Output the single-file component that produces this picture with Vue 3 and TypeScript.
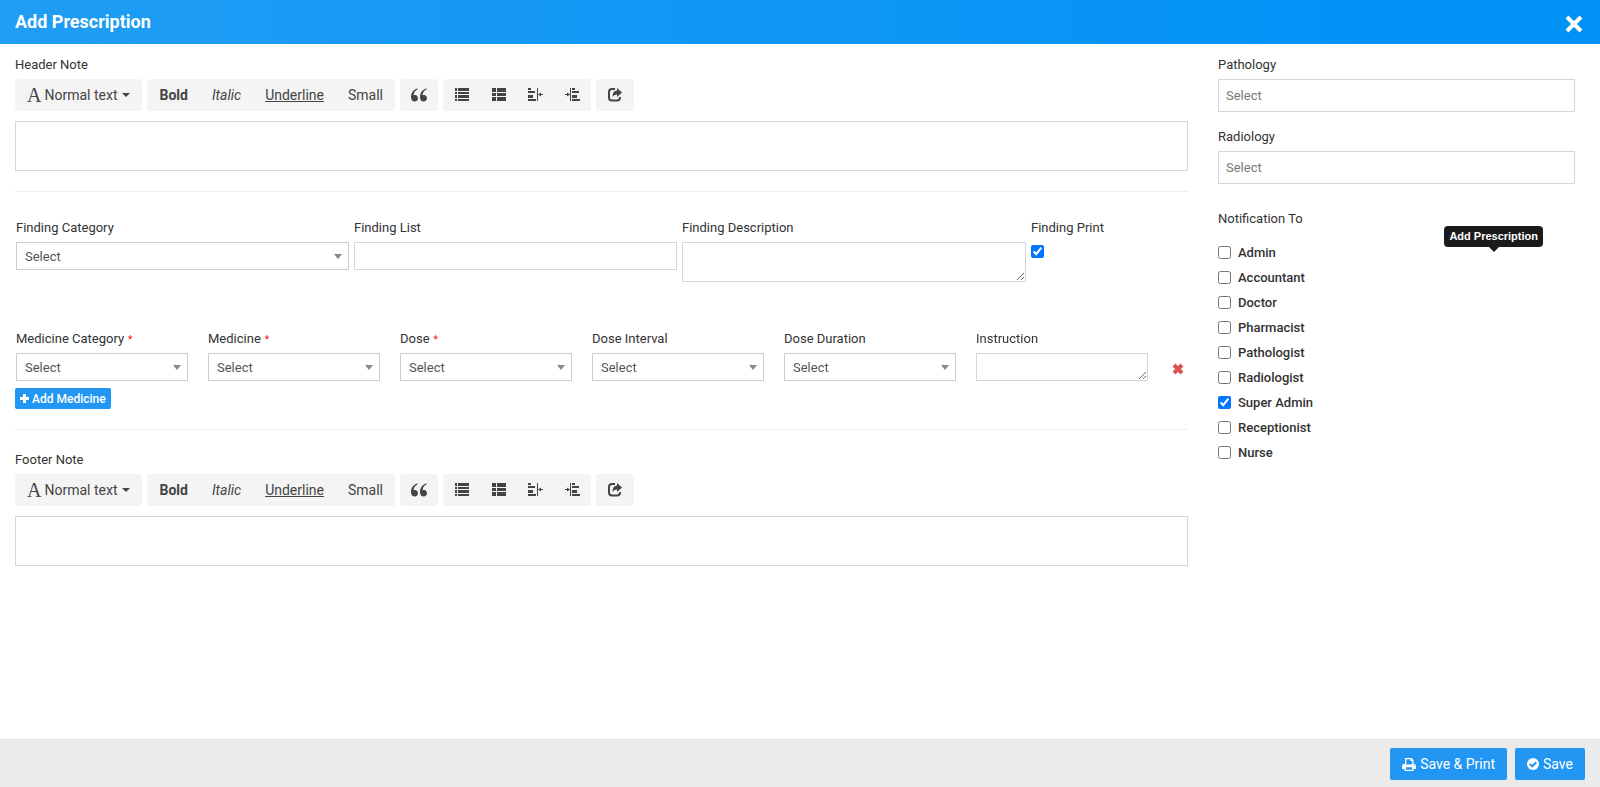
<script setup lang="ts">
import { reactive, ref } from 'vue'

interface MedicineField {
  id: string
  label: string
  required: boolean
}

interface Role {
  name: string
  checked: boolean
}

const notes = [
  { id: 'header-note', label: 'Header Note' },
  { id: 'footer-note', label: 'Footer Note' },
]

const medicineFields: MedicineField[] = [
  { id: 'med-category', label: 'Medicine Category', required: true },
  { id: 'med-name', label: 'Medicine', required: true },
  { id: 'med-dose', label: 'Dose', required: true },
  { id: 'med-interval', label: 'Dose Interval', required: false },
  { id: 'med-duration', label: 'Dose Duration', required: false },
]

const roles = reactive<Role[]>([
  { name: 'Admin', checked: false },
  { name: 'Accountant', checked: false },
  { name: 'Doctor', checked: false },
  { name: 'Pharmacist', checked: false },
  { name: 'Pathologist', checked: false },
  { name: 'Radiologist', checked: false },
  { name: 'Super Admin', checked: true },
  { name: 'Receptionist', checked: false },
  { name: 'Nurse', checked: false },
])

const findingPrint = ref(true)
</script>

<template>
  <form class="modal" @submit.prevent>
    <header class="modal-header">
      <h1>Add Prescription</h1>
      <button type="button" class="close" aria-label="Close">
        <svg width="18" height="18" viewBox="0 0 18 18"><path d="M2 2L16 16M16 2L2 16" stroke="currentColor" stroke-width="4" fill="none" /></svg>
      </button>
    </header>

    <div class="modal-body">
      <main class="main-col">
        <template v-for="(note, index) in notes" :key="note.id">
          <section class="note">
            <label class="field-label" :for="note.id">{{ note.label }}</label>
            <div class="toolbar">
              <div class="group">
                <button type="button"><span class="glyph-a">A</span> Normal text <i class="caret"></i></button>
              </div>
              <div class="group">
                <button type="button"><b>Bold</b></button>
                <button type="button"><em>Italic</em></button>
                <button type="button"><u>Underline</u></button>
                <button type="button">Small</button>
              </div>
              <div class="group single">
                <button type="button" aria-label="Quote">
                  <svg width="16" height="14" viewBox="0 0 16 14"><path d="M6.6.4C3 1.1 0 4.200 0 8.900C0 11.900 1.500 13.500 3.700 13.500C5.600 13.500 7 12.100 7 10.200C7 8.300 5.700 7 4 7C3.400 7 2.900 7.100 2.600 7.300C2.700 4.500 4.300 2.300 6.800 1.300ZM15.600.4C12 1.100 9 4.200 9 8.900C9 11.900 10.500 13.500 12.700 13.500C14.600 13.500 16 12.100 16 10.200C16 8.300 14.700 7 13 7C12.400 7 11.900 7.100 11.600 7.300C11.700 4.500 13.300 2.300 15.800 1.300Z" /></svg>
                </button>
              </div>
              <div class="group icons">
                <button type="button" aria-label="Unordered list">
                  <svg width="14" height="14" viewBox="0 0 14 14"><path d="M0 0h2v3H0zM3 0h11v3H3zM0 4h2v2H0zM3 4h11v2H3zM0 7h2v3H0zM3 7h11v3H3zM0 11h2v2H0zM3 11h11v2H3z" /></svg>
                </button>
                <button type="button" aria-label="Ordered list">
                  <svg width="14" height="14" viewBox="0 0 14 14"><path d="M0 0h4v4H0zM5 0h9v4H5zM0 5h4v3H0zM5 5h9v3H5zM0 9h4v4H0zM5 9h9v4H5z" /></svg>
                </button>
                <button type="button" aria-label="Outdent">
                  <svg width="15" height="14" viewBox="0 0 15 14"><path d="M0 0h3v2H0zM0 3h7v2H0zM0 7h5v3H0zM0 11h8v2H0zM9 0h1v13H9zM10 6.500l3-2v1.500h2v1h-2v1.500z" /></svg>
                </button>
                <button type="button" aria-label="Indent">
                  <svg width="15" height="14" viewBox="0 0 15 14"><path d="M7 0h3v2H7zM7 3h7v2H7zM7 7h5v3H7zM7 11h8v2H7zM5 0h1v13H5zM5 6.500l-3-2v1.500H0v1h2v1.500z" /></svg>
                </button>
              </div>
              <div class="group single">
                <button type="button" aria-label="Insert link">
                  <svg width="14" height="14" viewBox="0 0 14 14"><path d="M7 1H4Q1 1 1 4V9.500Q1 12.500 4 12.500H9Q12 12.500 12 9.500V9" fill="none" stroke="currentColor" stroke-width="2" /><path d="M9 0L14 4.500L9 9V6.500Q6 6.300 4.500 9Q4.500 3 9 2.600Z" /></svg>
                </button>
              </div>
            </div>
            <textarea :id="note.id" class="editor"></textarea>
          </section>

          <template v-if="index === 0">
            <section class="findings">
              <div class="field">
                <label class="field-label" for="finding-category">Finding Category</label>
                <span class="select-box">
                  <select id="finding-category"><option>Select</option></select>
                </span>
              </div>
              <div class="field">
                <label class="field-label" for="finding-list">Finding List</label>
                <input id="finding-list" class="text-input" type="text" />
              </div>
              <div class="field">
                <label class="field-label" for="finding-description">Finding Description</label>
                <textarea id="finding-description" class="text-input tall"></textarea>
              </div>
              <div class="field">
                <label class="field-label" for="finding-print">Finding Print</label>
                <input id="finding-print" v-model="findingPrint" class="print-check" type="checkbox" />
              </div>
            </section>

            <section class="medicines">
              <div v-for="f in medicineFields" :key="f.id" class="field">
                <label class="field-label" :for="f.id">{{ f.label }}<small v-if="f.required" class="req">*</small></label>
                <span class="select-box">
                  <select :id="f.id"><option>Select</option></select>
                </span>
              </div>
              <div class="field">
                <label class="field-label" for="instruction">Instruction</label>
                <textarea id="instruction" class="text-input"></textarea>
              </div>
              <button type="button" class="remove" aria-label="Remove medicine">
                <svg width="12" height="12" viewBox="0 0 12 12"><path d="M2 2L10 10M10 2L2 10" stroke="currentColor" stroke-width="4" fill="none" /></svg>
              </button>
            </section>
            <button type="button" class="add-medicine">
              <svg width="9" height="9" viewBox="0 0 9 9"><path d="M4.500 0V9M0 4.500H9" stroke="currentColor" stroke-width="3" /></svg>
              Add Medicine
            </button>
          </template>
        </template>
      </main>

      <aside class="side-col">
        <label class="field-label" for="pathology">Pathology</label>
        <input id="pathology" class="multi" type="text" placeholder="Select" />
        <label class="field-label" for="radiology">Radiology</label>
        <input id="radiology" class="multi" type="text" placeholder="Select" />
        <fieldset class="notify">
          <legend class="field-label">Notification To</legend>
          <label v-for="role in roles" :key="role.name" class="role">
            <input v-model="role.checked" type="checkbox" />{{ role.name }}
          </label>
          <div class="tooltip" role="tooltip">Add Prescription</div>
        </fieldset>
      </aside>
    </div>

    <footer class="modal-footer">
      <button type="submit" class="primary">
        <svg width="14" height="13" viewBox="0 0 14 13"><path fill-rule="evenodd" d="M3 0H9.500L11.500 2V6H12Q14 6 14 8V11H11.500V13H2.500V11H0V8Q0 6 2 6H3ZM4.300 1.300V6.500H10.200V3H8.500V1.300ZM3.800 9.200V11.800H10.200V9.200ZM11.600 7.300V8.300H12.600V7.300Z" /></svg>
        Save &amp; Print
      </button>
      <button type="submit" class="primary">
        <svg width="12" height="12" viewBox="0 0 12 12"><circle cx="6" cy="6" r="6" /><path d="M2.800 6L5.200 8.300L9.300 4.200" fill="none" stroke="#2196f3" stroke-width="2" /></svg>
        Save
      </button>
    </footer>
  </form>
</template>

<style>
body {
  margin: 0;
}
</style>

<style scoped>
.modal,
.modal * {
  box-sizing: border-box;
}
.modal {
  display: flex;
  flex-direction: column;
  min-height: 100vh;
  font: 14px/20px Roboto, "Liberation Sans", sans-serif;
  color: #333;
  background: #fff;
}
button,
input,
select,
textarea {
  font: inherit;
  color: inherit;
  margin: 0;
}
button {
  border: 0;
  background: none;
  padding: 0;
  cursor: pointer;
}
svg {
  fill: currentColor;
  flex: none;
}
.modal-header {
  display: flex;
  justify-content: space-between;
  align-items: center;
  height: 44px;
  padding: 0 17px 0 15px;
  color: #fff;
  background: linear-gradient(to right, #209df4, #0292f6 85%);
}
.modal-header h1 {
  margin: 0;
  font-size: 18px;
  line-height: 24px;
  font-weight: 700;
}
.close {
  display: flex;
  padding-top: 3px;
}
.modal-body {
  flex: 1;
  display: grid;
  grid-template-columns: minmax(0, 1173fr) minmax(0, 357fr);
  gap: 30px;
  padding: 10px 25px 10px 15px;
}
.field-label {
  display: block;
  font-size: 13px;
  line-height: 22px;
  margin-bottom: 3px;
}
.toolbar {
  display: flex;
  flex-wrap: wrap;
  gap: 5px;
}
.group {
  display: flex;
  background: #f4f4f4;
  border-radius: 3px;
}
.group button {
  display: flex;
  align-items: center;
  justify-content: center;
  height: 32px;
  padding: 0 12px;
  color: #444;
}
.group.single button {
  width: 38px;
  padding: 0;
}
.group.icons button {
  width: 37px;
  padding: 0;
}
.glyph-a {
  font: 20px/20px "Liberation Serif", serif;
  margin-right: 3px;
}
.caret {
  margin-left: 5px;
  border: 4px solid transparent;
  border-top-color: currentColor;
  border-bottom: 0;
}
.editor {
  display: block;
  width: 100%;
  height: 50px;
  margin-top: 10px;
  padding: 6px 12px;
  border: 1px solid #d2d6de;
  border-radius: 0;
  resize: none;
  background: #fff;
}
.findings {
  display: grid;
  grid-template-columns: 333fr 323fr 344fr 157fr;
  gap: 5px;
  margin-top: 20px;
  padding: 25px 0 0 1px;
  border-top: 1px solid #eee;
}
.field {
  min-width: 0;
}
.select-box {
  position: relative;
  display: block;
}
.select-box::after {
  content: "";
  position: absolute;
  top: 12px;
  right: 7px;
  border: 4px solid transparent;
  border-top: 5px solid #888;
  border-bottom: 0;
  pointer-events: none;
}
.select-box select {
  display: block;
  appearance: none;
  width: 100%;
  height: 28px;
  padding: 1px 20px 0 8px;
  font-size: 13px;
  color: #555;
  background: #fff;
  border: 1px solid #ccc;
  border-radius: 0;
}
.text-input {
  display: block;
  width: 100%;
  height: 28px;
  padding: 4px 8px;
  border: 1px solid #d2d6de;
  border-radius: 0;
  background: #fff;
}
.tall {
  height: 40px;
}
.print-check {
  display: block;
  width: 13px;
  height: 13px;
  margin-top: 6px;
}
.medicines {
  display: grid;
  grid-template-columns: repeat(6, minmax(0, 1fr)) 20px;
  gap: 20px;
  margin-top: 46px;
  padding-left: 1px;
}
.req {
  margin-left: 4px;
  font-size: 10px;
  line-height: 1;
  color: red;
}
.remove {
  display: flex;
  align-items: center;
  justify-content: center;
  align-self: end;
  height: 24px;
  color: #d9534f;
}
.add-medicine {
  display: inline-flex;
  align-items: center;
  gap: 3px;
  height: 21px;
  margin-top: 7px;
  padding: 0 5px;
  font-size: 12px;
  font-weight: 500;
  color: #fff;
  background: #2196f3;
  border-radius: 2px;
}
.add-medicine + .note {
  margin-top: 20px;
  padding-top: 19px;
  border-top: 1px solid #eee;
}
.multi {
  display: block;
  width: 100%;
  height: 33px;
  margin-bottom: 14px;
  padding: 0 7px;
  font-size: 13px;
  border: 1px solid #d2d6de;
  border-radius: 0;
}
.multi::placeholder {
  color: #777;
}
.notify {
  position: relative;
  margin: 24px 0 0;
  padding: 0;
  border: 0;
}
.notify .field-label {
  padding: 0;
  margin-bottom: 10px;
}
.role {
  display: flex;
  align-items: center;
  gap: 7px;
  height: 25px;
  font-size: 13px;
  font-weight: 500;
}
.role input {
  width: 13px;
  height: 13px;
}
.tooltip {
  position: absolute;
  top: -14px;
  right: 32px;
  padding: 0 5px;
  font: 700 11px/21px "Liberation Sans", Arial, sans-serif;
  color: #fff;
  background: #1b1b1b;
  border-radius: 4px;
}
.tooltip::after {
  content: "";
  position: absolute;
  top: 100%;
  left: 50%;
  margin-left: -5px;
  border: 5px solid transparent;
  border-top-color: #1b1b1b;
  border-bottom: 0;
}
.modal-footer {
  display: flex;
  justify-content: flex-end;
  gap: 8px;
  padding: 8px 15px 7px;
  background: #ebebeb;
  border-top: 1px solid #e2e2e2;
}
.primary {
  display: inline-flex;
  align-items: center;
  gap: 4px;
  height: 32px;
  padding: 0 12px;
  color: #fff;
  background: #2196f3;
  border-radius: 2px;
}
</style>
